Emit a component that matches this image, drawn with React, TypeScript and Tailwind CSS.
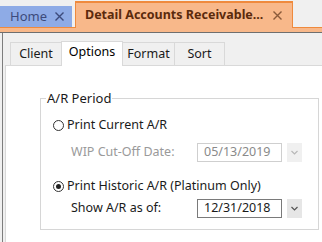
import React from 'react';

const font = { fontFamily: '"Noto Sans", "Open Sans", sans-serif' };

// Small "x" close glyph used on the document tabs
const CloseX: React.FC<{ color: string }> = ({ color }) => (
  <svg width="9" height="9" viewBox="0 0 9 9" className="shrink-0">
    <path d="M0.5 0.5 L8.5 8.5 M8.5 0.5 L0.5 8.5" stroke={color} strokeWidth="1.4" />
  </svg>
);

const Chevron: React.FC<{ color: string }> = ({ color }) => (
  <svg width="7" height="5" viewBox="0 0 7 5">
    <path d="M0.5 1 L3.5 4 L6.5 1" stroke={color} strokeWidth="1.2" fill="none" />
  </svg>
);

const Radio: React.FC<{ checked?: boolean; label: string }> = ({ checked, label }) => (
  <div className="flex items-center h-[16px]">
    <span className="w-[11px] h-[11px] rounded-full border border-[#333] bg-white flex items-center justify-center ml-[12px] mr-[3px]">
      {checked && <span className="w-[5px] h-[5px] rounded-full bg-[#222]" />}
    </span>
    <span className="text-[12.5px] text-[#1a1a1a] whitespace-nowrap">{label}</span>
  </div>
);

const DateField: React.FC<{ label: string; value: string; disabled?: boolean }> = ({ label, value, disabled }) => (
  <div className="flex items-center h-[19px]">
    <span className={`w-[156px] pl-[30px] text-[12.5px] whitespace-nowrap ${disabled ? 'text-[#9a9a9a]' : 'text-[#1a1a1a]'}`}>
      {label}
    </span>
    <div
      className={`w-[85px] h-[19px] border flex items-center pl-[6px] text-[12.5px] bg-white ${
        disabled ? 'border-[#cfcfcf] text-[#8a8a8a]' : 'border-[#7a7a7a] text-[#1a1a1a]'
      }`}
    >
      {value}
    </div>
    <div className={`ml-[5px] w-[15px] h-[19px] flex items-center justify-center ${disabled ? 'bg-[#f0f0f0]' : 'bg-[#e6e6e6]'}`}>
      <Chevron color={disabled ? '#b8b8b8' : '#555'} />
    </div>
  </div>
);

const tabs = ['Client', 'Options', 'Format', 'Sort'];
const tabWidths: Record<string, string> = {
  Client: 'w-[52px]',
  Options: 'w-[62px]',
  Format: 'w-[53px]',
  Sort: 'w-[51px]',
};

export default function App() {
  return (
    <div className="w-[322px] h-[242px] bg-[#f0f0f0] overflow-hidden flex flex-col" style={font}>
      {/* Document tabs */}
      <div className="flex items-end h-[28px]">
        <div className="w-[72px] h-[22px] bg-[#8eabe6] border-b border-[#ef8a3d] flex items-center pl-[10px] pr-[8px] justify-between">
          <span className="text-[13px] text-[#3d4b7c]">Home</span>
          <CloseX color="#3d4b7c" />
        </div>
        <div className="w-[3px] h-[1px] bg-[#ef8a3d]" />
        <div className="w-[218px] h-[27px] bg-[#f8b88a] border-t-2 border-x border-[#ef8a3d] flex items-center pl-[9px] pr-[10px] justify-between">
          <span className="text-[12.5px] font-bold text-[#5b2a0c] whitespace-nowrap">Detail Accounts Receivable...</span>
          <CloseX color="#8a5a3a" />
        </div>
        <div className="flex-1 h-[1px] bg-[#ef8a3d]" />
      </div>
      <div className="h-[4px] bg-[#f8b88a]" />
      <div className="h-[1px] bg-[#6f6f6f]" />

      {/* Document body */}
      <div className="flex-1 flex pl-[2px]">
        <div className="flex-1 border-l border-[#7d7d7d] pl-[2px] pt-[8px] flex flex-col">
          {/* Inner tab strip */}
          <div className="flex items-end h-[24px] pl-[5px] relative z-10">
            {tabs.map((t) =>
              t === 'Options' ? (
                <div
                  key={t}
                  className={`${tabWidths[t]} h-[25px] bg-white border-t border-x border-[#d9d9d9] flex items-center justify-center pb-[3px] -mb-[1px] -ml-[1px]`}
                >
                  <span className="text-[12.5px] text-black">{t}</span>
                </div>
              ) : (
                <div
                  key={t}
                  className={`${tabWidths[t]} h-[23px] bg-[#f0f0f0] border-t border-x border-[#d9d9d9] flex items-center justify-center -ml-[1px] first:ml-0`}
                >
                  <span className="text-[12.5px] text-[#1a1a1a]">{t}</span>
                </div>
              )
            )}
          </div>

          {/* Options page */}
          <div className="flex-1 bg-white border-t border-l border-[#d9d9d9] pl-[34px] pr-[3px] pt-[25px]">
            <fieldset className="border border-[#d6d6d6] h-[139px] pt-[12px]">
              <legend className="ml-[5px] px-[1px] text-[13px] text-[#1a1a1a] leading-[14px]">A/R Period</legend>
              <div className="flex flex-col">
                <Radio label="Print Current A/R" />
                <div className="mt-[10px]">
                  <DateField label="WIP Cut-Off Date:" value="05/13/2019" disabled />
                </div>
                <div className="mt-[16px]">
                  <Radio checked label="Print Historic A/R (Platinum Only)" />
                </div>
                <div className="mt-[5px]">
                  <DateField label="Show A/R as of:" value="12/31/2018" />
                </div>
              </div>
            </fieldset>
          </div>
        </div>
      </div>
    </div>
  );
}
